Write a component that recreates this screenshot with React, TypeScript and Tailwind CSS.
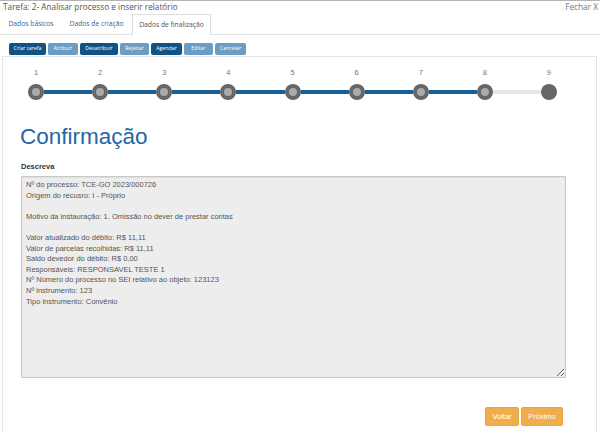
import React from 'react';

// Modal body: task header, tabs, toolbar, step wizard and the summary textarea
const toolbar = [
  { label: 'Criar tarefa', w: 'w-[37px]', dark: true },
  { label: 'Atribuir', w: 'w-[30px]', dark: false },
  { label: 'Desatribuir', w: 'w-[38px]', dark: true },
  { label: 'Rejeitar', w: 'w-[29px]', dark: false },
  { label: 'Agendar', w: 'w-[31px]', dark: true },
  { label: 'Editar', w: 'w-[29px]', dark: false },
  { label: 'Cancelar', w: 'w-[31px]', dark: false },
];

const summary = [
  'Nº do processo: TCE-GO 2023/000726',
  'Origem do recusro: I - Próprio',
  '',
  'Motivo da instauração: 1. Omissão no dever de prestar contas',
  '',
  'Valor atualizado do débito: R$ 11,11',
  'Valor de parcelas recolhidas: R$ 11,11',
  'Saldo devedor do débito: R$ 0,00',
  'Responsáveis: RESPONSAVEL TESTE 1',
  'Nº Número do processo no SEI relativo ao objeto: 123123',
  'Nº instrumento: 123',
  'Tipo instrumento: Convênio',
].join('\n');

const steps = [1, 2, 3, 4, 5, 6, 7, 8, 9];
const current = 9;

function Step({ n }: { n: number }) {
  const done = n < current;
  // left segment: blue up to the last done step, gray into the current one
  const left = n === 1 ? 'bg-transparent' : n < current ? 'bg-[#165f97]' : 'bg-[#e6e6e6]';
  const right = n === steps.length ? 'bg-transparent' : n + 1 < current ? 'bg-[#165f97]' : 'bg-[#e6e6e6]';
  return (
    <div className="flex flex-col items-center">
      <span className="h-[10px] text-[7.5px] leading-[10px] text-[#777]">{n}</span>
      <div className="mt-[6px] flex w-full items-center">
        <div className={`h-[4px] flex-1 ${left}`} />
        {done ? (
          <div className="flex h-[16px] w-[16px] items-center justify-center rounded-full bg-[#666]">
            <div className="h-[8px] w-[8px] rounded-full bg-[#aaa]" />
          </div>
        ) : (
          <div className="h-[16px] w-[16px] rounded-full bg-[#666]" />
        )}
        <div className={`h-[4px] flex-1 ${right}`} />
      </div>
    </div>
  );
}

export default function App() {
  return (
    <div className="h-[433px] w-[600px] overflow-hidden border-t border-[#b5b5b5] bg-white font-['Open_Sans',sans-serif]">
      {/* Header */}
      <div className="flex h-[13px] items-center justify-between pl-[3px] pr-[2px]">
        <span className="text-[8.25px] leading-none text-[#555]">Tarefa: 2- Analisar processo e inserir relatório</span>
        <span className="text-[8.25px] leading-none text-[#777]">Fechar X</span>
      </div>

      {/* Tabs */}
      <div className="flex h-[21px] items-end gap-[1px] border-b border-[#e2e2e2] pl-[1px]">
        <div className="flex h-[20px] w-[60px] items-center justify-center text-[6.75px] text-[#2f6797]">Dados básicos</div>
        <div className="flex h-[20px] w-[69px] items-center justify-center text-[6.75px] text-[#2f6797]">Dados de criação</div>
        <div className="-mb-[1px] flex h-[21px] w-[79px] items-center justify-center border border-b-0 border-[#ddd] bg-white text-[6.75px] text-[#555]">
          Dados de finalização
        </div>
      </div>

      {/* Toolbar */}
      <div className="mt-[8px] flex gap-[2px] pl-[9px]">
        {toolbar.map((b) => (
          <button
            key={b.label}
            className={`flex h-[12px] ${b.w} items-center justify-center rounded-[2px] text-[5.25px] leading-none text-white ${
              b.dark ? 'bg-[#0f5286]' : 'bg-[#6b9cc4]'
            }`}
          >
            {b.label}
          </button>
        ))}
      </div>

      {/* Panel */}
      <div className="ml-[2px] mt-[1px] h-[400px] w-[595px] border border-[#e4e4e4] font-['Liberation_Sans',Arial,sans-serif]">
        <div className="mt-[11px] ml-[1px] grid w-[577px] grid-cols-9">
          {steps.map((n) => (
            <Step key={n} n={n} />
          ))}
        </div>

        <h1 className="ml-[17px] mt-[25px] text-[22.5px] leading-[23px] text-[#2467a6]">Confirmação</h1>

        <div className="ml-[18px] mt-[14px] w-[545px]">
          <div className="text-[7.5px] font-bold leading-[10px] text-[#333]">Descreva</div>
          <textarea
            readOnly
            value={summary}
            className="mt-[4px] block h-[202px] w-[545px] resize-y rounded-[1px] border border-[#c8c8c8] bg-[#ededed] px-[4px] pt-[3px] text-[7.5px] leading-[10.6px] text-[#555] shadow-[inset_0_1px_1px_rgba(0,0,0,0.06)] outline-none font-['Liberation_Sans',Arial,sans-serif]"
          />
          <div className="mt-[29px] flex justify-end gap-[2px] pr-[3px]">
            <button className="flex h-[19px] w-[34px] items-center justify-center rounded-[2px] border border-[#eea43c] bg-[#f0ad4e] text-[7.5px] text-white">
              Voltar
            </button>
            <button className="flex h-[19px] w-[42px] items-center justify-center rounded-[2px] border border-[#eea43c] bg-[#f0ad4e] text-[7.5px] text-white">
              Próximo
            </button>
          </div>
        </div>
      </div>
    </div>
  );
}
